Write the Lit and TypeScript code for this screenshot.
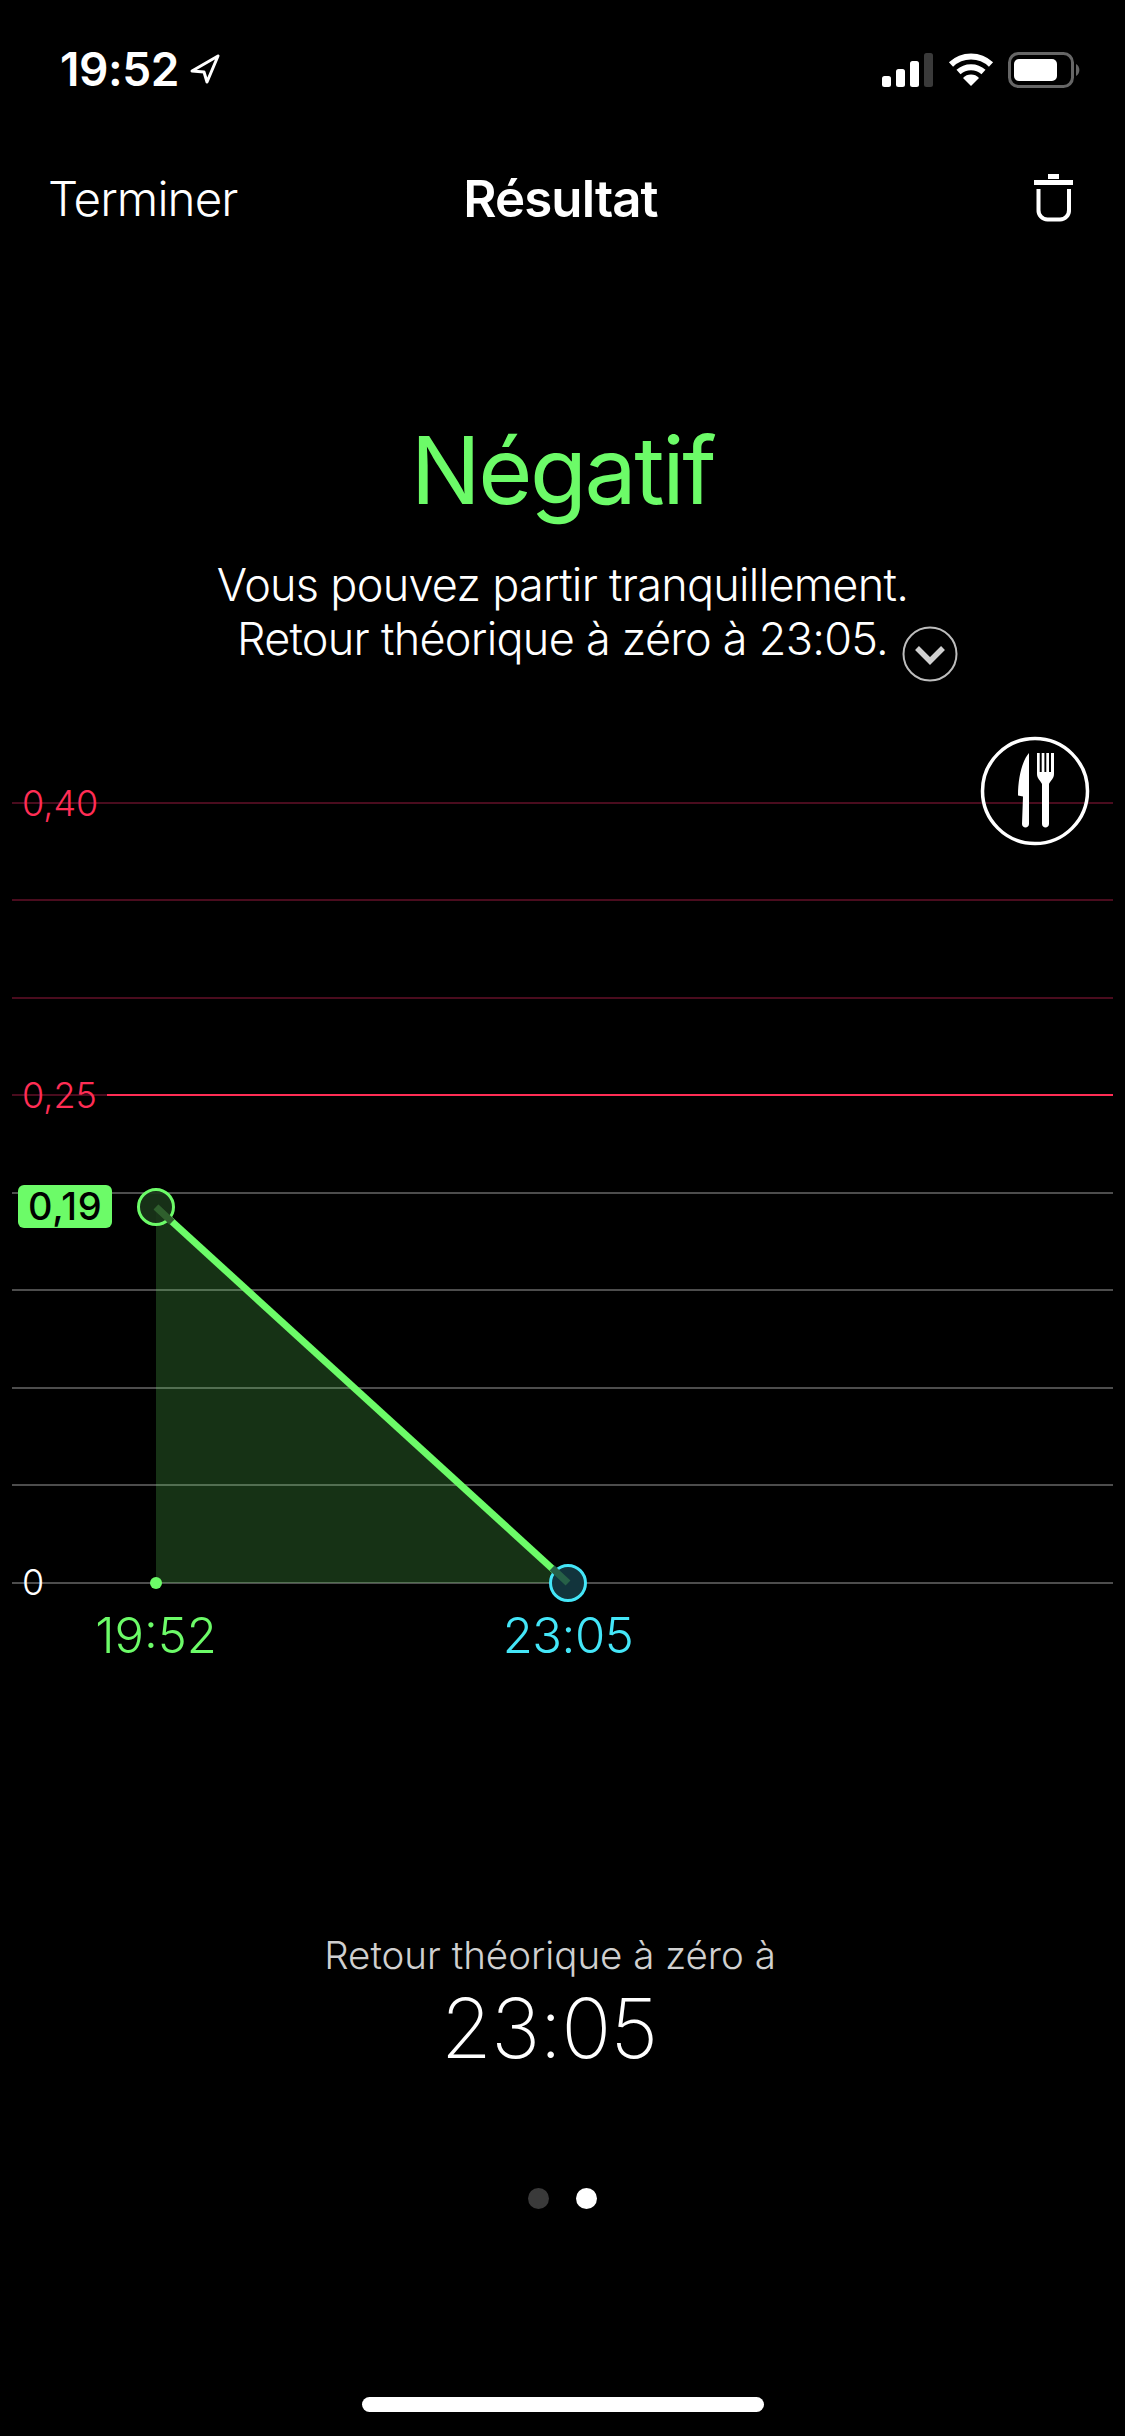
import { LitElement, html, css, svg } from "lit";
import { customElement } from "lit/decorators.js";

const GRID = [
  { y: 803, c: "#4a0c1e" },
  { y: 900, c: "#4a0c1e" },
  { y: 998, c: "#4a0c1e" },
  { y: 1095, c: "#ff2d55" },
  { y: 1193, c: "#4d4d4d" },
  { y: 1290, c: "#4d4d4d" },
  { y: 1388, c: "#4d4d4d" },
  { y: 1485, c: "#4d4d4d" },
  { y: 1583, c: "#4d4d4d" },
];
const TOP = 700;

@customElement("app-root")
export class AppRoot extends LitElement {
  static styles = css`
    :host {
      display: block;
      width: 1125px;
      height: 2436px;
      background: #000;
      color: #fff;
      font-family: "Inter", "Liberation Sans", sans-serif;
      overflow: hidden;
    }
    .status {
      height: 100px;
      box-sizing: border-box;
      padding: 50px 43px 0 60px;
      display: flex;
      justify-content: space-between;
      align-items: flex-start;
    }
    .time {
      display: flex;
      align-items: center;
      gap: 10px;
      font-size: 46px;
      line-height: 38px;
      font-weight: 600;
      letter-spacing: -0.4px;
    }
    .indicators { display: flex; align-items: center; gap: 14px; padding-top: 2px; }
    .nav {
      height: 96px;
      padding: 50px 52px 0 48px;
      display: grid;
      grid-template-columns: 1fr auto 1fr;
      align-items: center;
    }
    .nav .left { font-size: 47.5px; font-weight: 300; letter-spacing: -0.9px; }
    .nav .title { font-size: 51px; font-weight: 600; letter-spacing: -0.9px; }
    .nav .right { justify-self: end; display: flex; }
    .head {
      padding-top: 169px;
      text-align: center;
    }
    h1 {
      margin: 0;
      font-size: 93px;
      line-height: 110px;
      font-weight: 400;
      letter-spacing: -2.5px;
      color: #6cfb68;
    }
    .msg {
      margin-top: 33px;
      font-size: 45px;
      line-height: 54px;
      font-weight: 300;
      letter-spacing: -0.72px;
    }
    .line2 { position: relative; display: inline-block; }
    .chev { position: absolute; left: calc(100% + 14px); top: 14px; display: block; }
    .chart { position: absolute; left: 0; top: ${TOP}px; width: 1125px; height: 1000px; }
    .chart svg { display: block; }
    .chart text { font-family: "Inter", "Liberation Sans", sans-serif; }
    .fork { position: absolute; left: 980px; top: 36px; display: block; }
    .bottom {
      position: absolute;
      left: 0;
      top: 1930px;
      width: 1100px;
      text-align: center;
    }
    .bottom .lab { font-size: 38.5px; line-height: 50px; font-weight: 300; color: #d0d0d0; }
    .bottom .val { font-size: 83px; line-height: 90px; font-weight: 200; letter-spacing: -1px; margin-top: 3px; padding-right: 2px; }
    .dots {
      position: absolute;
      left: 528px;
      top: 2188px;
      display: flex;
      gap: 27px;
    }
    .dots i { width: 21px; height: 21px; border-radius: 50%; background: #3a3a3a; display: block; }
    .dots i.on { background: #fff; }
    .home {
      position: absolute;
      left: 362px;
      top: 2397px;
      width: 402px;
      height: 15px;
      border-radius: 7.5px;
      background: #fff;
    }
  `;

  render() {
    return html`
      <div class="status">
        <div class="time">
          19:52
          <svg width="32" height="32" viewBox="0 0 32 32">
            <path d="M29 3 L3 18 L15 19 L18 29 Z" fill="none" stroke="#fff" stroke-width="3" stroke-linejoin="round"/>
          </svg>
        </div>
        <div class="indicators">
          <svg width="52" height="34" viewBox="0 0 52 34">
            <rect x="0" y="23" width="9" height="11" rx="2.5" fill="#fff"/>
            <rect x="14" y="16" width="9" height="18" rx="2.5" fill="#fff"/>
            <rect x="28" y="8" width="9" height="26" rx="2.5" fill="#fff"/>
            <rect x="42" y="0" width="9" height="34" rx="2.5" fill="#3a3a3a"/>
          </svg>
          <svg width="46" height="34" viewBox="0 0 46 34">
            <path d="M3 11.5 A29 29 0 0 1 43 11.5 M10.5 19 A18.5 18.5 0 0 1 35.5 19" fill="none" stroke="#fff" stroke-width="6"/>
            <path d="M15 25 A11 11 0 0 1 31 25 L23 33 Z" fill="#fff"/>
          </svg>
          <svg width="74" height="36" viewBox="0 0 74 36">
            <rect x="1.5" y="1.5" width="63" height="33" rx="9" fill="none" stroke="#666" stroke-width="3"/>
            <rect x="6" y="7" width="43" height="22" rx="5" fill="#fff"/>
            <path d="M68 12 A7 7 0 0 1 68 24 Z" fill="#666"/>
          </svg>
        </div>
      </div>
      <div class="nav">
        <div class="left">Terminer</div>
        <div class="title">Résultat</div>
        <div class="right">
          <svg width="40" height="49" viewBox="0 0 40 49">
            <rect x="15" y="0" width="11" height="5" fill="#fff"/>
            <rect x="1" y="6" width="39" height="5" fill="#fff"/>
            <path d="M5.5 15 V36 A9 9 0 0 0 14.5 45.5 H27 A9 9 0 0 0 36 36 V15" fill="none" stroke="#fff" stroke-width="4"/>
          </svg>
        </div>
      </div>
      <div class="head">
        <h1>Négatif</h1>
        <div class="msg">
          Vous pouvez partir tranquillement.<br />
          <span class="line2">Retour théorique à zéro à 23:05.
            <svg class="chev" width="56" height="56" viewBox="0 0 56 56">
              <circle cx="28" cy="28" r="26.5" fill="none" stroke="#bdbdbd" stroke-width="2"/>
              <path d="M15 22 L28 35 L41 22" fill="none" stroke="#d0d0d0" stroke-width="5.5"/>
            </svg>
          </span>
        </div>
      </div>
      <div class="chart">
        <svg width="1125" height="1000" viewBox="0 ${TOP} 1125 1000">
          ${GRID.map((g) => svg`<line x1="12" x2="1113" y1=${g.y} y2=${g.y} stroke=${g.c} stroke-width="2"/>`)}
          <rect x="0" y="1080" width="107" height="34" fill="#000"/>
          <line x1="12" x2="107" y1="1095" y2="1095" stroke="#4a0c1e" stroke-width="2"/>
          <polygon points="156,1207 568,1583 156,1583" fill="#6cfb68" fill-opacity="0.2"/>
          <line x1="156" y1="1207" x2="568" y2="1583" stroke="#6cfb68" stroke-width="7"/>
          <circle cx="156" cy="1207" r="17.5" fill="#1a351a" fill-opacity="0.9" stroke="#6cfb68" stroke-width="3"/>
          <line x1="156" y1="1207" x2="172" y2="1222" stroke="#2f5f2d" stroke-width="7"/>
          <circle cx="568" cy="1583" r="17.5" fill="#12343c" stroke="#44e6f8" stroke-width="3"/>
          <line x1="552" y1="1568" x2="568" y2="1583" stroke="#266047" stroke-width="7"/>
          <circle cx="156" cy="1583" r="6" fill="#6cfb68"/>
          <text x="22" y="816" font-size="36" font-weight="300" fill="#ff2d55">0,40</text>
          <text x="22" y="1108" font-size="36" font-weight="300" fill="#ff2d55">0,25</text>
          <text x="22" y="1595" font-size="36" font-weight="300" fill="#fff">0</text>
          <rect x="18" y="1185" width="94" height="43" rx="6" fill="#6cfb68"/>
          <text x="28" y="1220" font-size="38" font-weight="500" letter-spacing="0.8" fill="#000">0,19</text>
          <text x="156" y="1653" font-size="49" font-weight="300" fill="#6cfb68" text-anchor="middle">19:52</text>
          <text x="568" y="1653" font-size="49" font-weight="300" letter-spacing="-0.5" fill="#44e6f8" text-anchor="middle">23:05</text>
        </svg>
        <svg class="fork" width="110" height="110" viewBox="0 0 110 110">
          <circle cx="55" cy="55" r="52.5" fill="none" stroke="#fff" stroke-width="3.5"/>
          <path d="M49 17 L49 88 C49 92.5 42 92.5 42 88 L43 60.5 L38 59.5 C38 42 42 25 49 17 Z" fill="#fff"/>
          <path d="M57 17 H59.7 V36 H61.7 V17 H64.4 V36 H66.3 V17 H69 V36 H71 V17 H74 V38 C74 43 70 45 69 48 L69 88 C69 92.5 62 92.5 62 88 L62 48 C61 45 57 43 57 38 Z" fill="#fff"/>
        </svg>
      </div>
      <div class="bottom">
        <div class="lab">Retour théorique à zéro à</div>
        <div class="val">23:05</div>
      </div>
      <div class="dots"><i></i><i class="on"></i></div>
      <div class="home"></div>
    `;
  }
}
